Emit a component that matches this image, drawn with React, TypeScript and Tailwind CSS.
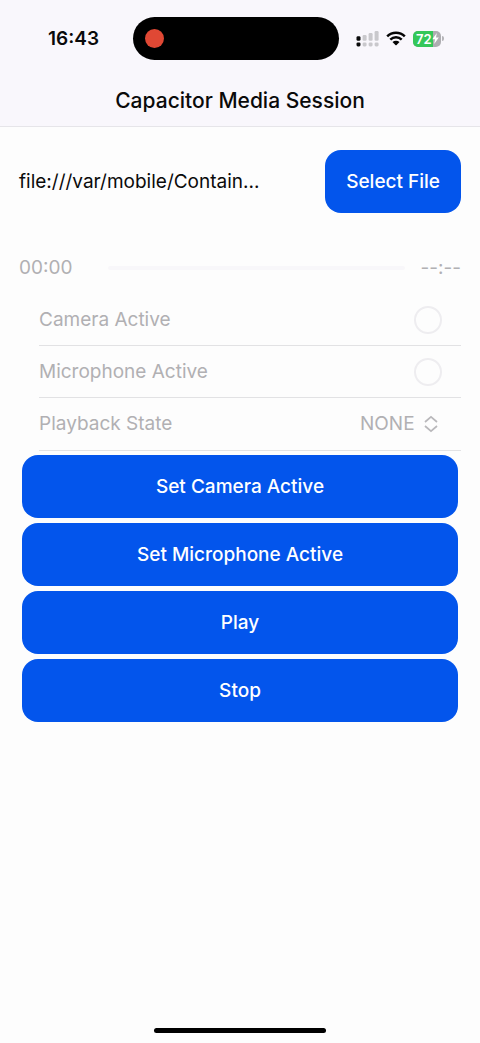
import { useState } from "react";

const actionClass =
  "h-[63px] w-full rounded-2xl bg-[#0355ec] font-medium text-white";

function SignalIcon() {
  return (
    <svg width="23" height="16" viewBox="0 0 23 16" aria-hidden="true">
      <g fill="#0a0a0a">
        <rect x="0.5" y="5.2" width="4" height="4.6" rx="1.4" />
        <rect x="0.5" y="11.4" width="4" height="4" rx="1.4" />
      </g>
      <g fill="#c9c8cc">
        <rect x="6.6" y="4" width="4" height="5.8" rx="1.2" />
        <rect x="12.6" y="2" width="4" height="7.8" rx="1.2" />
        <rect x="18.6" y="0" width="4" height="9.8" rx="1.2" />
        <rect x="6.6" y="11.4" width="4" height="4" rx="1.4" />
        <rect x="12.6" y="11.4" width="4" height="4" rx="1.4" />
        <rect x="18.6" y="11.4" width="4" height="4" rx="1.4" />
      </g>
    </svg>
  );
}

function WifiIcon() {
  return (
    <svg width="20" height="15" viewBox="0 0 20 15" aria-hidden="true">
      <g fill="none" stroke="#050505" strokeWidth="2.5">
        <path d="M1.2 5.3A12.6 12.6 0 0 1 18.8 5.3" />
        <path d="M4.3 8.6A8.2 8.2 0 0 1 15.7 8.6" />
      </g>
      <path d="M6.5 11.1A5 5 0 0 1 13.5 11.1L10.6 14Q10 14.6 9.4 14Z" fill="#050505" />
    </svg>
  );
}

function Battery() {
  return (
    <div className="flex items-center gap-px">
      <div className="relative flex h-4 w-[28px] items-center overflow-hidden rounded-[5px] bg-[#aeadb1]">
        <div className="absolute inset-y-0 left-0 w-[20px] bg-[#34c759]" />
        <span className="relative pl-[3px] text-[13px] leading-4 font-semibold text-white">72</span>
        <svg className="relative" width="7" height="11" viewBox="0 0 7 11" aria-hidden="true">
          <path d="M4.8 0L0.3 6.2H3L2.2 11L6.8 4.5H4Z" fill="#fff" />
        </svg>
      </div>
      <div className="h-[5px] w-[2px] rounded-r-full bg-[#b5b4b8]" />
    </div>
  );
}

function CheckRow({ id, label }: { id: string; label: string }) {
  return (
    <div className="ml-5 flex h-[52px] items-center justify-between border-b border-[#e2e2e4] pr-[19px]">
      <label htmlFor={id}>{label}</label>
      <input
        id={id}
        type="checkbox"
        disabled
        className="size-7 appearance-none rounded-full border-2 border-[#eeedf0]"
      />
    </div>
  );
}

export default function App() {
  const [state, setState] = useState("NONE");

  return (
    <div className="flex min-h-screen flex-col bg-[#fdfdfd] font-['Inter',sans-serif] text-[19px] leading-6 text-[#0a0a0a]">
      <header className="border-b border-[#e6e5e9] bg-[#f9f7fc] pt-[17px]">
        <div className="grid grid-cols-[1fr_206px_1fr] items-center pr-2">
          <div className="pl-12 font-semibold">16:43</div>
          <div className="flex h-[43px] items-center rounded-full bg-black pl-3">
            <div className="size-[19px] rounded-full bg-[#e04834]" />
          </div>
          <div className="flex items-center gap-[7px] pl-[17px]">
            <SignalIcon />
            <WifiIcon />
            <Battery />
          </div>
        </div>
        <h1 className="pt-[29px] pb-[13px] text-center text-[21px] font-medium">Capacitor Media Session</h1>
      </header>

      <main className="px-[19px] pt-[23px]">
        <div className="flex items-center justify-between">
          <span className="whitespace-nowrap">file:///var/mobile/Contain...</span>
          <button type="button" className="h-[63px] rounded-2xl bg-[#0355ec] px-[21px] font-medium text-white">
            Select File
          </button>
        </div>

        <div className="flex items-center gap-4 pt-[43px] pb-[14px] text-[#b1b0b3]">
          <span>00:00</span>
          <input
            type="range"
            aria-label="Position"
            disabled
            min={0}
            max={100}
            defaultValue={0}
            className="ml-5 h-1 min-w-0 flex-1 appearance-none rounded-full bg-[#f8f7fa] [&::-webkit-slider-thumb]:appearance-none"
          />
          <span>--:--</span>
        </div>

        <div className="text-[#b1b0b3]">
          <CheckRow id="camera" label="Camera Active" />
          <CheckRow id="microphone" label="Microphone Active" />
          <div className="ml-5 flex h-[53px] items-center border-b border-[#e2e2e4] pr-[22px]">
            <label htmlFor="playback" className="flex-1">
              Playback State
            </label>
            <select
              id="playback"
              disabled
              value={state}
              onChange={(e) => setState(e.target.value)}
              className="appearance-none bg-transparent opacity-100"
            >
              <option>NONE</option>
            </select>
            <svg
              className="ml-2"
              width="16"
              height="18"
              viewBox="0 0 16 18"
              fill="none"
              stroke="#b9b8bb"
              strokeWidth="1.7"
              aria-hidden="true"
            >
              <path d="M2 7L8 1.8L14 7M2 11L8 16.2L14 11" />
            </svg>
          </div>
        </div>

        <div className="flex flex-col gap-[5px] px-[3px] pt-1">
          <button type="button" className={actionClass}>Set Camera Active</button>
          <button type="button" className={actionClass}>Set Microphone Active</button>
          <button type="button" className={actionClass}>Play</button>
          <button type="button" className={actionClass}>Stop</button>
        </div>
      </main>

      <div className="mt-auto flex justify-center pt-6 pb-[10px]">
        <div className="h-[5px] w-[172px] rounded-full bg-black" />
      </div>
    </div>
  );
}
